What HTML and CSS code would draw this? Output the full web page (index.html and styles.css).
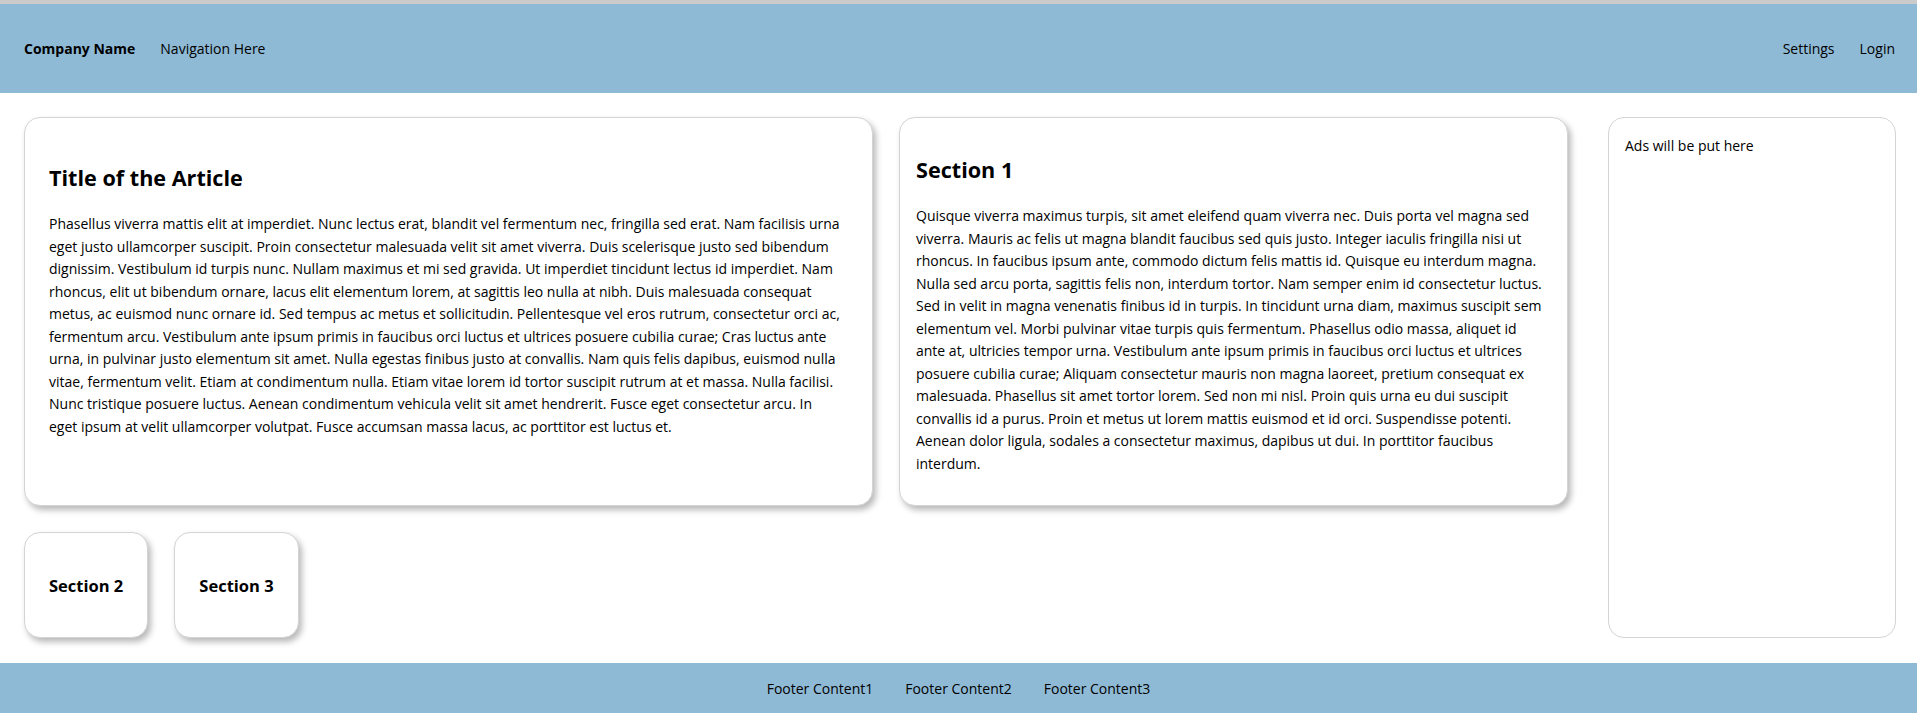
FILE: index.html
```html
<!DOCTYPE html>
<html lang="en">
<head>
<meta charset="utf-8">
<title>Company Name</title>
<link rel="stylesheet" href="styles.css">
</head>
<body>
<header class="topbar">
  <div class="topbar-left">
    <span class="brand">Company Name</span>
    <span class="nav-link">Navigation Here</span>
  </div>
  <div class="topbar-right">
    <span class="nav-link">Settings</span>
    <span class="nav-link">Login</span>
  </div>
</header>
<main class="layout">
  <div class="content">
    <div class="row-main">
      <article class="card card-article">
        <h2 class="card-title">Title of the Article</h2>
        <p class="card-text">Phasellus viverra mattis elit at imperdiet. Nunc lectus erat, blandit vel fermentum nec, fringilla sed erat. Nam facilisis urna<br>
eget justo ullamcorper suscipit. Proin consectetur malesuada velit sit amet viverra. Duis scelerisque justo sed bibendum<br>
dignissim. Vestibulum id turpis nunc. Nullam maximus et mi sed gravida. Ut imperdiet tincidunt lectus id imperdiet. Nam<br>
rhoncus, elit ut bibendum ornare, lacus elit elementum lorem, at sagittis leo nulla at nibh. Duis malesuada consequat<br>
metus, ac euismod nunc ornare id. Sed tempus ac metus et sollicitudin. Pellentesque vel eros rutrum, consectetur orci ac,<br>
fermentum arcu. Vestibulum ante ipsum primis in faucibus orci luctus et ultrices posuere cubilia curae; Cras luctus ante<br>
urna, in pulvinar justo elementum sit amet. Nulla egestas finibus justo at convallis. Nam quis felis dapibus, euismod nulla<br>
vitae, fermentum velit. Etiam at condimentum nulla. Etiam vitae lorem id tortor suscipit rutrum at et massa. Nulla facilisi.<br>
Nunc tristique posuere luctus. Aenean condimentum vehicula velit sit amet hendrerit. Fusce eget consectetur arcu. In<br>
eget ipsum at velit ullamcorper volutpat. Fusce accumsan massa lacus, ac porttitor est luctus et.</p>
      </article>
      <section class="card card-section">
        <h2 class="card-title">Section 1</h2>
        <p class="card-text">Quisque viverra maximus turpis, sit amet eleifend quam viverra nec. Duis porta vel magna sed<br>
viverra. Mauris ac felis ut magna blandit faucibus sed quis justo. Integer iaculis fringilla nisi ut<br>
rhoncus. In faucibus ipsum ante, commodo dictum felis mattis id. Quisque eu interdum magna.<br>
Nulla sed arcu porta, sagittis felis non, interdum tortor. Nam semper enim id consectetur luctus.<br>
Sed in velit in magna venenatis finibus id in turpis. In tincidunt urna diam, maximus suscipit sem<br>
elementum vel. Morbi pulvinar vitae turpis quis fermentum. Phasellus odio massa, aliquet id<br>
ante at, ultricies tempor urna. Vestibulum ante ipsum primis in faucibus orci luctus et ultrices<br>
posuere cubilia curae; Aliquam consectetur mauris non magna laoreet, pretium consequat ex<br>
malesuada. Phasellus sit amet tortor lorem. Sed non mi nisl. Proin quis urna eu dui suscipit<br>
convallis id a purus. Proin et metus ut lorem mattis euismod et id orci. Suspendisse potenti.<br>
Aenean dolor ligula, sodales a consectetur maximus, dapibus ut dui. In porttitor faucibus<br>
interdum.</p>
      </section>
    </div>
    <div class="row-small">
      <section class="card card-small"><h3 class="small-title">Section 2</h3></section>
      <section class="card card-small"><h3 class="small-title">Section 3</h3></section>
    </div>
  </div>
  <aside class="ads">Ads will be put here</aside>
</main>
<footer class="footer">
  <span class="footer-item">Footer Content1</span>
  <span class="footer-item">Footer Content2</span>
  <span class="footer-item">Footer Content3</span>
</footer>
</body>
</html>
```

FILE: styles.css
```css
* { box-sizing: border-box; }

html, body { background: #ffffff; }

body {
  margin: 0;
  border-top: 4px solid #cbcbcb;
  font-family: "Open Sans", "Noto Sans", sans-serif;
  font-size: 14px;
  color: #000;
}

.topbar {
  height: 89px;
  background: #8fbad6;
  display: flex;
  align-items: center;
  justify-content: space-between;
  padding: 0 22px 0 24px;
}

.topbar-left, .topbar-right {
  display: flex;
  align-items: center;
  gap: 25px;
}

.brand { font-weight: 700; }

.layout {
  display: grid;
  grid-template-columns: 1fr 288px;
  column-gap: 40px;
  padding: 24px 21px 25px 24px;
}

.content {
  display: flex;
  flex-direction: column;
  gap: 26px;
}

.row-main {
  display: grid;
  grid-template-columns: 849fr 669fr;
  column-gap: 26px;
}

.card {
  background: #fff;
  border: 1px solid #d4d4d4;
  border-radius: 16px;
  box-shadow: 3px 4px 6px rgba(0, 0, 0, 0.28);
}

.card-article { padding: 24px; }
.card-section { padding: 16px; }

.card-title {
  margin: 21px 0 20px;
  font-size: 21.6px;
  line-height: 30px;
  font-weight: 700;
}

.card-text {
  margin: 15px 0 14px;
  line-height: 22.5px;
  white-space: nowrap;
}

.row-small {
  display: flex;
  gap: 26px;
}

.card-small {
  padding: 42px 24px 40px;
}

.small-title {
  margin: 0;
  font-size: 16.5px;
  line-height: 22px;
  font-weight: 700;
  white-space: nowrap;
}

.ads {
  border: 1px solid #d4d4d4;
  border-radius: 16px;
  padding: 17px 16px 16px;
  line-height: 22.5px;
}

.footer {
  height: 50px;
  background: #8fbad6;
  display: flex;
  align-items: center;
  justify-content: center;
  gap: 32px;
}
```
